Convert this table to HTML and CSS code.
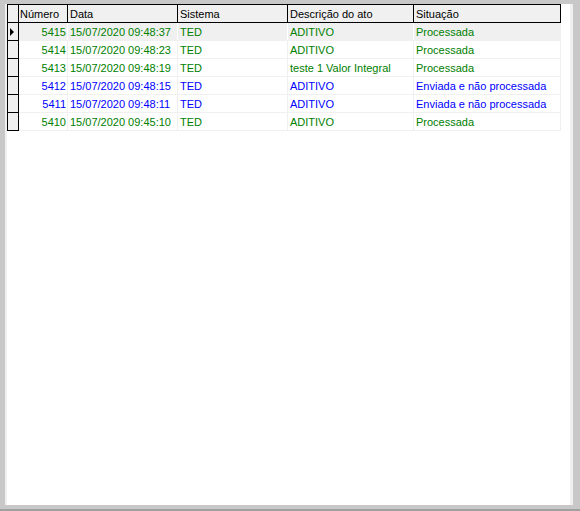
FILE: index.html
```html
<!DOCTYPE html>
<html>
<head>
<meta charset="utf-8">
<link rel="stylesheet" href="styles.css">
</head>
<body>
<div class="frame">
  <div class="panel">
    <div class="row head">
      <div class="c ind"></div>
      <div class="c num">Número</div>
      <div class="c data">Data</div>
      <div class="c sis">Sistema</div>
      <div class="c desc">Descrição do ato</div>
      <div class="c sit">Situação</div>
    </div>
    <div class="row cur green">
      <div class="c ind"><span class="arrow"></span></div>
      <div class="c num">5415</div>
      <div class="c data">15/07/2020 09:48:37</div>
      <div class="c sis">TED</div>
      <div class="c desc">ADITIVO</div>
      <div class="c sit">Processada</div>
    </div>
    <div class="row green">
      <div class="c ind"></div>
      <div class="c num">5414</div>
      <div class="c data">15/07/2020 09:48:23</div>
      <div class="c sis">TED</div>
      <div class="c desc">ADITIVO</div>
      <div class="c sit">Processada</div>
    </div>
    <div class="row green">
      <div class="c ind"></div>
      <div class="c num">5413</div>
      <div class="c data">15/07/2020 09:48:19</div>
      <div class="c sis">TED</div>
      <div class="c desc">teste 1 Valor Integral</div>
      <div class="c sit">Processada</div>
    </div>
    <div class="row blue">
      <div class="c ind"></div>
      <div class="c num">5412</div>
      <div class="c data">15/07/2020 09:48:15</div>
      <div class="c sis">TED</div>
      <div class="c desc">ADITIVO</div>
      <div class="c sit">Enviada e não processada</div>
    </div>
    <div class="row blue">
      <div class="c ind"></div>
      <div class="c num">5411</div>
      <div class="c data">15/07/2020 09:48:11</div>
      <div class="c sis">TED</div>
      <div class="c desc">ADITIVO</div>
      <div class="c sit">Enviada e não processada</div>
    </div>
    <div class="row green">
      <div class="c ind"></div>
      <div class="c num">5410</div>
      <div class="c data">15/07/2020 09:45:10</div>
      <div class="c sis">TED</div>
      <div class="c desc">ADITIVO</div>
      <div class="c sit">Processada</div>
    </div>
  </div>
</div>
<div class="bottom"></div>
</body>
</html>
```
FILE: styles.css
```css
html, body {
  margin: 0;
  padding: 0;
}
body {
  width: 580px;
  height: 511px;
  overflow: hidden;
  background: #c8c8c8;
  font-family: "Liberation Sans", Arial, sans-serif;
  font-size: 11px;
}
.frame {
  height: 505px;
  box-sizing: border-box;
  padding: 4px 7px 0 5px;
  display: flex;
}
.panel {
  flex: 1;
  background: #fff;
  border-left: 2px solid #f0f0f0;
  border-right: 3px solid #f0f0f0;
}
.bottom {
  height: 4px;
  border-bottom: 2px solid #a0a0a0;
}
.row {
  display: flex;
  height: 18px;
  box-sizing: border-box;
  border-bottom: 1px solid #f0f0f0;
  width: 554px;
}
.row.head {
  height: 19px;
  background: #f0f0f0;
  border: 1px solid #000;
  color: #000;
}
.c {
  box-sizing: border-box;
  border-right: 1px solid #f0f0f0;
  line-height: 17px;
  padding-top: 1px;
  padding-left: 2px;
  white-space: nowrap;
  overflow: hidden;
}
.head .c {
  border-right: 1px solid #000;
  line-height: 17px;
}
.head .c:last-child {
  border-right: none;
}
.ind {
  width: 12px;
  background: #f0f0f0;
  border-left: 1px solid #000;
  border-right: 1px solid #000;
  position: relative;
  padding: 0;
}
.row:not(.head) .ind {
  height: 18px;
  margin-bottom: -1px;
  border-bottom: 1px solid #000;
}
.head .ind {
  width: 11px;
  border-left: none;
}
.row:not(.head) .c.ind {
  border-right: 1px solid #000;
}
.num {
  width: 49px;
  text-align: right;
  padding-left: 0;
  padding-right: 1px;
}
.head .num {
  text-align: left;
  padding-left: 1px;
}
.data { width: 110px; }
.sis { width: 110px; }
.desc { width: 126px; }
.sit { width: 147px; }
.row:not(.head) .sit { border-right: 1px solid #f0f0f0; }
.head .sit { width: 146px; }
.cur { background: #f0f0f0; }
.cur .c { border-right-color: #fff; }
.cur .c.ind { border-right-color: #000; }
.green { color: #008000; }
.blue { color: #0000ff; }
.arrow {
  position: absolute;
  left: 2px;
  top: 5px;
  width: 0;
  height: 0;
  border-left: 4px solid #000;
  border-top: 4px solid transparent;
  border-bottom: 4px solid transparent;
}
```
